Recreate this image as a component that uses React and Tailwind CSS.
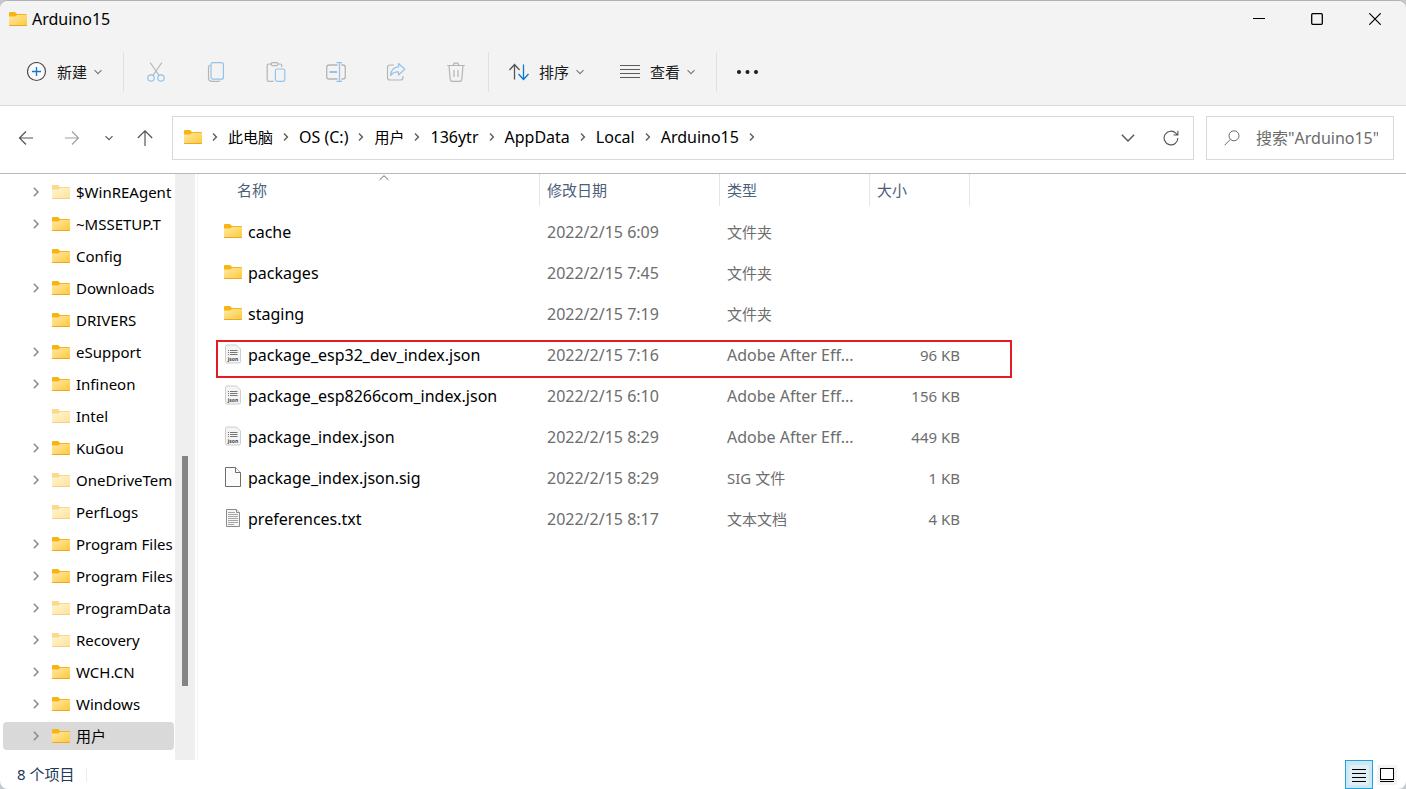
import { Fragment } from "react";

const folders = [
  { name: "$WinREAgent", expandable: true, hidden: true },
  { name: "~MSSETUP.T", expandable: true },
  { name: "Config" },
  { name: "Downloads", expandable: true },
  { name: "DRIVERS" },
  { name: "eSupport", expandable: true },
  { name: "Infineon", expandable: true },
  { name: "Intel", hidden: true },
  { name: "KuGou", expandable: true },
  { name: "OneDriveTem", expandable: true, hidden: true },
  { name: "PerfLogs", hidden: true },
  { name: "Program Files", expandable: true },
  { name: "Program Files", expandable: true },
  { name: "ProgramData", expandable: true, hidden: true },
  { name: "Recovery", expandable: true, hidden: true },
  { name: "WCH.CN", expandable: true },
  { name: "Windows", expandable: true },
  { name: "用户", expandable: true, selected: true },
];

const files = [
  { name: "cache", date: "2022/2/15 6:09", type: "文件夹", icon: FolderIcon },
  { name: "packages", date: "2022/2/15 7:45", type: "文件夹", icon: FolderIcon },
  { name: "staging", date: "2022/2/15 7:19", type: "文件夹", icon: FolderIcon },
  {
    name: "package_esp32_dev_index.json",
    date: "2022/2/15 7:16",
    type: "Adobe After Eff...",
    size: "96 KB",
    icon: JsonIcon,
    marked: true,
  },
  {
    name: "package_esp8266com_index.json",
    date: "2022/2/15 6:10",
    type: "Adobe After Eff...",
    size: "156 KB",
    icon: JsonIcon,
  },
  {
    name: "package_index.json",
    date: "2022/2/15 8:29",
    type: "Adobe After Eff...",
    size: "449 KB",
    icon: JsonIcon,
  },
  {
    name: "package_index.json.sig",
    date: "2022/2/15 8:29",
    type: "SIG 文件",
    size: "1 KB",
    icon: BlankFileIcon,
  },
  {
    name: "preferences.txt",
    date: "2022/2/15 8:17",
    type: "文本文档",
    size: "4 KB",
    icon: TextFileIcon,
  },
];

const crumbs = ["此电脑", "OS (C:)", "用户", "136ytr", "AppData", "Local", "Arduino15"];

const actions = [
  { label: "剪切", icon: CutIcon },
  { label: "复制", icon: CopyIcon },
  { label: "粘贴", icon: PasteIcon },
  { label: "重命名", icon: RenameIcon },
  { label: "共享", icon: ShareIcon },
  { label: "删除", icon: DeleteIcon },
];

// Latin text runs one step larger than Chinese text
const textSize = (text) => (/^[\x20-\x7e]+$/.test(text) ? "text-[16px]" : "text-[15px]");

/* Icons */
function FolderIcon({ faded }) {
  return (
    <svg width="18" height="14" viewBox="0 0 18 14" className="shrink-0" opacity={faded ? 0.5 : 1}>
      <defs>
        <linearGradient id="folder" x1="0" y1="0" x2="1" y2="1">
          <stop offset="0" stopColor="#ffe9a8" />
          <stop offset="1" stopColor="#fdc937" />
        </linearGradient>
      </defs>
      <path d="M0 1Q0 0 1 0H6L8 2H17Q18 2 18 3V6H0Z" fill="#f7b416" />
      <path d="M0 4.500H6.200L8.200 3H18V13Q18 14 17 14H1Q0 14 0 13Z" fill="url(#folder)" />
      <path d="M0 13H18Q18 14 17 14H1Q0 14 0 13Z" fill="#e9a725" />
    </svg>
  );
}

function JsonIcon() {
  return (
    <svg width="18" height="20" viewBox="0 0 18 20" className="shrink-0">
      <path d="M3 1H12.500L16.500 5V17.500Q16.500 19 15 19H3Q1.500 19 1.500 17.500V2.500Q1.500 1 3 1Z" fill="#f4f4f4" stroke="#cdcdcd" />
      <path d="M4 6.500H5M4 8.500H5M4 10.500H5M6 6.500H13.500M6 8.500H13.500M6 10.500H13.500" stroke="#777" />
      <text x="9" y="16.500" textAnchor="middle" fontSize="5" fontWeight="700" fill="#444">json</text>
    </svg>
  );
}

function BlankFileIcon() {
  return (
    <svg width="18" height="20" viewBox="0 0 18 20" fill="#fbfbfb" stroke="#6d6d6d" className="shrink-0">
      <path d="M1.500 .5H11.500L16.500 5.500V19.500H1.500Z" />
      <path d="M11.500 .5V5.500H16.500" />
    </svg>
  );
}

function TextFileIcon() {
  return (
    <svg width="18" height="20" viewBox="0 0 18 20" fill="#f6f6f6" stroke="#8a8a8a" className="shrink-0">
      <path d="M2.500 1.500H12.500L15.500 4.500V18.500H2.500Z" />
      <path d="M12.500 1.500V4.500H15.500" />
      <path d="M4 4.500H11M4 6.500H14M4 8.500H14M4 10.500H14M4 12.500H14M4 14.500H14M4 16.500H10" stroke="#a5a5a5" />
    </svg>
  );
}

function ChevronDown({ size = 8 }) {
  return (
    <svg width={size} height={size} viewBox="0 0 8 8" fill="none" stroke="currentColor" strokeWidth={size > 8 ? 0.8 : 1.1}>
      <path d="M.5 2.200L4 5.700L7.500 2.200" />
    </svg>
  );
}

function CrumbChevron() {
  return (
    <svg width="6" height="8" viewBox="0 0 6 8" fill="none" stroke="#5c5c5c" strokeWidth="1.400" className="shrink-0">
      <path d="M1 .6L4.400 4L1 7.400" />
    </svg>
  );
}

function NewIcon() {
  return (
    <svg width="20" height="20" viewBox="0 0 20 20" fill="none">
      <circle cx="9.500" cy="9.500" r="9" stroke="#4d4d4d" fill="#fafafa" strokeWidth="1.200" />
      <path d="M9.500 5V14M5 9.500H14" stroke="#0f78d4" strokeWidth="1.300" />
    </svg>
  );
}

function CutIcon() {
  return (
    <svg width="20" height="20" viewBox="0 0 20 20" fill="none" strokeWidth="1.200">
      <path d="M4.200 .5L13 13.500M15.800 .5L7 13.500" stroke="#b5b5b5" />
      <circle cx="5" cy="16" r="3.200" stroke="#93c3ea" />
      <circle cx="15" cy="16" r="3.200" stroke="#93c3ea" />
    </svg>
  );
}

function CopyIcon() {
  return (
    <svg width="20" height="20" viewBox="0 0 20 20" fill="none" strokeWidth="1.200">
      <path d="M4.500 3Q2.500 3.500 2.500 5.500V15.500Q2.500 19.400 6 19.400H12Q13.500 19.400 14 18.500" stroke="#b5b5b5" />
      <rect x="5" y=".6" width="12.400" height="16.600" rx="2" stroke="#93c3ea" />
    </svg>
  );
}

function PasteIcon() {
  return (
    <svg width="20" height="20" viewBox="0 0 20 20" fill="none" strokeWidth="1.200">
      <path d="M6 2H3Q1.200 2 1.200 4V17.500Q1.200 19.400 3 19.400H7.500M12 2H14Q15.800 2 15.800 4V5" stroke="#b5b5b5" />
      <rect x="5" y=".6" width="7" height="3" rx="1.500" stroke="#b5b5b5" />
      <rect x="9.400" y="7" width="9.400" height="12.400" rx="1.800" stroke="#93c3ea" />
    </svg>
  );
}

function RenameIcon() {
  return (
    <svg width="20" height="20" viewBox="0 0 20 20" fill="none" strokeWidth="1.300">
      <path d="M11.500 3H3Q.7 3 .7 5.300V14.700Q.7 17 3 17H11.500M15.500 3H17Q19.300 3 19.300 5.300V14.700Q19.300 17 17 17H15.500" stroke="#b5b5b5" />
      <path d="M10.500 .7H16M13.500 .7V19.300M10.500 19.300H16" stroke="#93c3ea" />
      <path d="M3.500 10H11" stroke="#93c3ea" strokeWidth="2" />
    </svg>
  );
}

function ShareIcon() {
  return (
    <svg width="20" height="20" viewBox="0 0 20 20" fill="none" strokeWidth="1.200" strokeLinejoin="round">
      <path d="M8 3H4Q1.500 3 1.500 5.500V15.500Q1.500 18 4 18H14.500Q17 18 17 15.500V14" stroke="#b5b5b5" />
      <path d="M12.500 1.500L18.800 7.300L12.500 13V9.800Q7.500 9.500 4.500 13.500Q5 5.500 12.500 4.800Z" stroke="#93c3ea" />
    </svg>
  );
}

function DeleteIcon() {
  return (
    <svg width="20" height="20" viewBox="0 0 20 20" fill="none" stroke="#b5b5b5" strokeWidth="1.200">
      <path d="M1.200 3.500H18.800M7.200 3.500Q7.400 .8 10 .8T12.800 3.500M3 3.500L4.200 17.400Q4.400 19.400 6.300 19.400H13.700Q15.600 19.400 15.800 17.400L17 3.500M8 8V15M12 8V15" />
    </svg>
  );
}

function SortIcon() {
  return (
    <svg width="20" height="18" viewBox="0 0 20 18" fill="none" strokeWidth="1.300">
      <path d="M5.500 16.500V1.500M.5 7L5.500 1.500L10.500 7" stroke="#555" />
      <path d="M14.500 1.500V16.500M9.500 11L14.500 16.500L19.500 11" stroke="#0f78d4" />
    </svg>
  );
}

function LinesIcon() {
  return (
    <svg width="20" height="14" viewBox="0 0 20 14" stroke="#5c5c5c">
      <path d="M0 .5H20M0 4.500H20M0 8.500H20M0 12.500H20" strokeWidth="1.200" />
    </svg>
  );
}

function ArrowIcon({ direction }) {
  const paths = {
    left: "M15 8H1.500M8 1.500L1.500 8L8 14.500",
    right: "M1 8H14.500M8 1.500L14.500 8L8 14.500",
    up: "M8 16V.8M.8 8L8 .8L15.200 8",
  };
  return (
    <svg width="16" height="16" viewBox="0 0 16 16" fill="none" stroke="currentColor" strokeWidth="1.200">
      <path d={paths[direction]} />
    </svg>
  );
}

function Divider() {
  return <div className="h-10 w-px shrink-0 bg-[#e0e0e0]" />;
}

function MenuButton({ icon, label }) {
  return (
    <button className="flex shrink-0 items-center text-[#1b1b1b]">
      {icon}
      <span className="mr-[7px] ml-2.5">{label}</span>
      <span className="text-[#777]">
        <ChevronDown />
      </span>
    </button>
  );
}

function TitleBar() {
  return (
    <header className="flex h-[37px] items-center justify-between pr-0.5 pb-0.5 pl-[9px]">
      <div className="flex items-center gap-[5px]">
        <FolderIcon />
        <h1 className="text-[16px]">Arduino15</h1>
      </div>
      <div className="flex h-full">
        <button aria-label="最小化" className="flex w-[58px] items-center justify-center">
          <svg width="12" height="12" viewBox="0 0 12 12" stroke="#000">
            <path d="M0 5.500H12" />
          </svg>
        </button>
        <button aria-label="最大化" className="flex w-[58px] items-center justify-center">
          <svg width="12" height="12" viewBox="0 0 12 12" fill="none" stroke="#000" strokeWidth="1.300">
            <rect x=".7" y=".7" width="10.600" height="10.600" rx="1" />
          </svg>
        </button>
        <button aria-label="关闭" className="flex w-[58px] items-center justify-center">
          <svg width="12" height="12" viewBox="0 0 12 12" stroke="#000" strokeWidth="1.200">
            <path d="M.3 .3L11.700 11.700M11.700 .3L.3 11.700" />
          </svg>
        </button>
      </div>
    </header>
  );
}

function Toolbar() {
  return (
    <div className="flex h-[68px] items-center border-b border-[#dcdcdc] pl-[27px]">
      <MenuButton icon={<NewIcon />} label="新建" />
      <div className="mr-0.5 ml-[21px]">
        <Divider />
      </div>
      {actions.map(({ label, icon: Icon }) => (
        <button key={label} aria-label={label} disabled className="flex h-10 w-[60px] shrink-0 items-center justify-center">
          <Icon />
        </button>
      ))}
      <div className="mr-5 ml-0.5">
        <Divider />
      </div>
      <MenuButton icon={<SortIcon />} label="排序" />
      <div className="w-9 shrink-0" />
      <MenuButton icon={<LinesIcon />} label="查看" />
      <div className="mr-5 ml-[21px]">
        <Divider />
      </div>
      <button aria-label="更多">
        <svg width="22" height="4" viewBox="0 0 22 4" fill="#1b1b1b">
          <circle cx="2" cy="2" r="2" />
          <circle cx="10.500" cy="2" r="2" />
          <circle cx="19" cy="2" r="2" />
        </svg>
      </button>
    </div>
  );
}

function AddressBar() {
  return (
    <div className="flex border-b border-[#b9b9b9] bg-white pt-2.5 pr-3 pb-[13px] pl-2.5">
      <div className="flex w-[162px] shrink-0 items-center text-[#555]">
        <button aria-label="后退" className="flex w-8 justify-center">
          <ArrowIcon direction="left" />
        </button>
        <button aria-label="前进" className="ml-3.5 flex w-8 justify-center text-[#a0a0a0]">
          <ArrowIcon direction="right" />
        </button>
        <button aria-label="最近位置" className="ml-[13px] flex w-4 justify-center">
          <ChevronDown />
        </button>
        <button aria-label="向上" className="ml-4 flex w-6 justify-center">
          <ArrowIcon direction="up" />
        </button>
      </div>
      <div className="flex h-11 min-w-0 flex-1 items-center justify-between border border-[#d9d9d9] pr-3.5 pl-[11px]">
        <nav className="flex items-center gap-2.5 pb-0.5 whitespace-nowrap">
          <FolderIcon />
          <CrumbChevron />
          {crumbs.map((crumb) => (
            <Fragment key={crumb}>
              <a href="#" className={textSize(crumb)}>
                {crumb}
              </a>
              <CrumbChevron />
            </Fragment>
          ))}
        </nav>
        <div className="flex items-center gap-7 text-[#555]">
          <button aria-label="历史记录">
            <ChevronDown size={14} />
          </button>
          <button aria-label="刷新">
            <svg width="16" height="16" viewBox="0 0 17 17" fill="none" stroke="currentColor" strokeWidth="1.200">
              <path d="M15.800 8.500A7.300 7.300 0 1 1 13.800 3.500L15.500 5.200M15.800 .8V5.300H11.300" />
            </svg>
          </button>
        </div>
      </div>
      <label className="ml-3 flex h-11 w-[188px] shrink-0 items-center border border-[#d9d9d9] pl-[17px]">
        <svg width="16" height="16" viewBox="0 0 16 16" fill="none" stroke="#6b6b6b" className="shrink-0">
          <circle cx="10" cy="5.800" r="5" />
          <path d="M6.400 9.400L.5 15.300" />
        </svg>
        <input
          type="search"
          aria-label="搜索"
          placeholder={'搜索"Arduino15"'}
          className="ml-4 w-full min-w-0 bg-transparent text-[16px] outline-none placeholder:text-[#6b6b6b]"
        />
      </label>
    </div>
  );
}

function Sidebar() {
  return (
    <aside className="flex w-[198px] shrink-0 border-r border-[#f3f3f3]">
      <ul className="flex w-[175px] flex-col gap-1 pt-1 pr-px pb-2.5 pl-[3px]">
        {folders.map((folder, index) => (
          <li key={index}>
            <button
              className={`flex h-7 w-full items-center overflow-hidden rounded-sm pl-[30px] whitespace-nowrap ${
                folder.selected ? "bg-[#d9d9d9]" : ""
              }`}
            >
              <span className="w-[19px] shrink-0">
                {folder.expandable && (
                  <svg width="6" height="10" viewBox="0 0 6 10" fill="none" stroke="#8a8a8a" strokeWidth="1.500">
                    <path d="M.8 .8L5 5L.8 9.200" />
                  </svg>
                )}
              </span>
              <FolderIcon faded={folder.hidden} />
              <span className="ml-1.5">{folder.name}</span>
            </button>
          </li>
        ))}
      </ul>
      <div className="flex w-5 flex-col items-center bg-[#efefef]">
        <div className="flex-[282]" />
        <div className="w-1.5 flex-[230] bg-[#858585]" />
        <div className="flex-[74]" />
      </div>
    </aside>
  );
}

function FileTable() {
  return (
    <main className="min-w-0 flex-1 pl-[18px]">
      <table className="w-[754px] table-fixed border-collapse text-left">
        <colgroup>
          <col className="w-[324px]" />
          <col className="w-[180px]" />
          <col className="w-[150px]" />
          <col className="w-[100px]" />
        </colgroup>
        <thead className="text-[#4c607a]">
          <tr className="h-[37px] align-top">
            <th className="relative p-0 font-normal">
              <div className="flex h-8 items-center border-r border-[#e5e5e5] pl-[21px]">名称</div>
              <svg width="10" height="6" viewBox="0 0 10 6" fill="none" stroke="#666" className="absolute top-px left-[163px]">
                <path d="M.5 5L5 .7L9.500 5" />
              </svg>
            </th>
            {["修改日期", "类型", "大小"].map((title) => (
              <th key={title} className="p-0 font-normal">
                <div className="flex h-8 items-center border-r border-[#e5e5e5] pl-[7px]">{title}</div>
              </th>
            ))}
          </tr>
        </thead>
        <tbody className="text-[#6d6d6d]">
          {files.map(({ name, date, type, size, icon: Icon, marked }) => (
            <tr key={name} className="h-[41px]">
              <td className="relative p-0 pl-2 text-[16px] text-black">
                <div className="flex items-center gap-1.5">
                  <span className="mb-0.5">
                    <Icon />
                  </span>
                  {name}
                </div>
                {marked && (
                  <div className="pointer-events-none absolute top-1.5 left-0 h-[38px] w-[796px] border-2 border-[#e31b23]" />
                )}
              </td>
              <td className="p-0 pl-[7px] text-[16px]">{date}</td>
              <td className={`p-0 pl-[7px] ${textSize(type)}`}>{type}</td>
              <td className="p-0 pr-2.5 text-right">{size}</td>
            </tr>
          ))}
        </tbody>
      </table>
    </main>
  );
}

function StatusBar() {
  return (
    <footer className="flex h-[29px] items-center pl-[17px] text-[#1e395b]">
      <span className="pb-0.5">8 个项目</span>
      <div className="ml-3 h-3.5 w-px bg-[#ececec]" />
      <div className="ml-auto flex h-full items-center gap-1 pr-[9px]">
        <button
          aria-label="详细信息"
          className="flex h-full w-7 items-center justify-center border border-[#26a0da] bg-[#cbe8f6]"
        >
          <svg width="20" height="20" viewBox="0 0 20 20" stroke="#000">
            <rect width="20" height="20" rx="2" fill="#e2eff5" stroke="none" />
            <path d="M3 4.500H17M3 8.500H17M3 12.500H17M3 16.500H17" />
          </svg>
        </button>
        <button aria-label="大图标">
          <svg width="20" height="20" viewBox="0 0 20 20" stroke="#000">
            <rect width="20" height="20" rx="2" fill="#f3f3f3" stroke="none" />
            <rect x="3.500" y="3.500" width="13" height="11" fill="#fff" />
            <path d="M3 16.500H17" />
          </svg>
        </button>
      </div>
    </footer>
  );
}

export default function App() {
  return (
    <div className="bg-[#c4c8cb]">
      <div className="flex min-h-screen flex-col overflow-hidden rounded-lg border-t border-[#b0b0b0] bg-white font-['Noto_Sans','Noto_Sans_CJK_SC',sans-serif] text-[15px] leading-5 text-black">
        <div className="bg-[#f3f3f3]">
          <TitleBar />
          <Toolbar />
        </div>
        <AddressBar />
        <div className="flex flex-1">
          <Sidebar />
          <FileTable />
        </div>
        <StatusBar />
      </div>
    </div>
  );
}
